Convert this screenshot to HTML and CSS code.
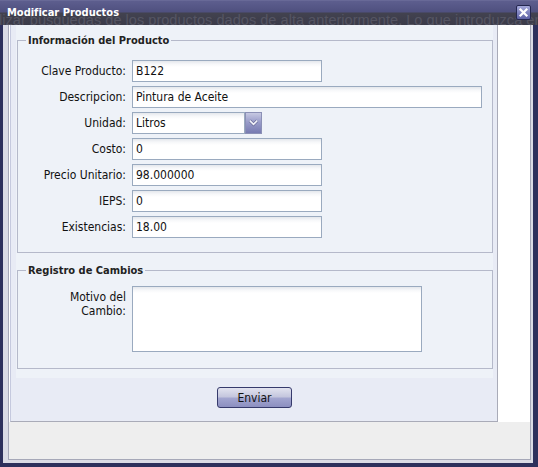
FILE: index.html
```html
<!DOCTYPE html>
<html lang="es">
<head>
<meta charset="utf-8">
<title>Modificar Productos</title>
<link rel="stylesheet" href="styles.css">
</head>
<body>
<div class="win">
  <div class="hdr">
    <span class="ghost">lizar búsquedas de los productos dados de alta anteriormente. Lo que introduzca en el campo de búsqueda</span>
    <span class="title">Modificar Productos</span>
    <span class="close"><svg width="15" height="15" viewBox="0 0 15 15"><defs><linearGradient id="cg" x1="0" y1="0" x2="0" y2="1"><stop offset="0" stop-color="#a6aadb"/><stop offset="1" stop-color="#5b5fa2"/></linearGradient></defs><rect x="0.5" y="0.5" width="14" height="14" rx="1.5" fill="url(#cg)" stroke="#24274f"/><path d="M4.5 4.5 L10.5 10.5 M10.5 4.5 L4.5 10.5" stroke="#ffffff" stroke-width="2.2" stroke-linecap="square"/></svg></span>
  </div>
  <div class="frame">
    <div class="body">
      <div class="scroll">
        <form class="panel">
          <div class="inner">
            <fieldset class="fs fs1">
              <legend>Información del Producto</legend>
              <div class="row"><label>Clave Producto:</label><input class="txt w190" value="B122"></div>
              <div class="row"><label>Descripcion:</label><input class="txt w350" value="Pintura de Aceite"></div>
              <div class="row"><label>Unidad:</label><div class="combo"><input class="txt w113" value="Litros"><span class="trig"><svg width="17" height="22" viewBox="0 0 17 22"><defs><linearGradient id="tg" x1="0" y1="0" x2="0" y2="1"><stop offset="0" stop-color="#c9cbe3"/><stop offset="0.45" stop-color="#9a9dca"/><stop offset="1" stop-color="#7579b0"/></linearGradient></defs><rect x="0.5" y="0.5" width="16" height="21" fill="url(#tg)" stroke="#8b90b6"/><path d="M4.8 8.6 L8.5 12.3 L12.2 8.6" fill="none" stroke="#6a6d99" stroke-width="3"/><path d="M4.8 8.6 L8.5 12.3 L12.2 8.6" fill="none" stroke="#f2f3fa" stroke-width="1.6"/></svg></span></div></div>
              <div class="row"><label>Costo:</label><input class="txt w190" value="0"></div>
              <div class="row"><label>Precio Unitario:</label><input class="txt w190" value="98.000000"></div>
              <div class="row"><label>IEPS:</label><input class="txt w190" value="0"></div>
              <div class="row"><label>Existencias:</label><input class="txt w190" value="18.00"></div>
            </fieldset>
            <fieldset class="fs fs2">
              <legend>Registro de Cambios</legend>
              <div class="row"><label class="multi">Motivo del<br>Cambio:</label><textarea class="area"></textarea></div>
            </fieldset>
          </div>
          <div class="btnbar"><button type="button" class="btn">Enviar</button></div>
        </form>
      </div>
      <div class="foot"></div>
    </div>
  </div>
</div>
</body>
</html>
```

FILE: styles.css
```css
html, body {
  margin: 0;
  padding: 0;
}
body {
  width: 538px;
  height: 467px;
  overflow: hidden;
  background: #3a3a48;
  font-family: "DejaVu Sans Condensed", "Liberation Sans", sans-serif;
  font-size: 12px;
  color: #111;
}
.win {
  width: 538px;
  height: 467px;
}
.hdr {
  position: relative;
  height: 25px;
  box-sizing: border-box;
  padding: 0 7px;
  display: flex;
  justify-content: space-between;
  align-items: flex-start;
  overflow: hidden;
  background: linear-gradient(to bottom, #7374a0 0, #5d5e8e 1px, #4f507f 12px, #42424f 13px, #3b3b49 25px);
}
.ghost {
  position: absolute;
  left: -1px;
  top: 13px;
  height: 12px;
  overflow: hidden;
  white-space: nowrap;
  font-family: "Liberation Sans", sans-serif;
  font-size: 14.6px;
  line-height: 14px;
  color: #555563;
}
.title {
  position: relative;
  color: #ffffff;
  font-weight: bold;
  font-size: 11px;
  line-height: 13px;
  padding-top: 6px;
}
.close {
  position: relative;
  margin-top: 5px;
  width: 15px;
  height: 15px;
}
.close svg, .trig svg {
  display: block;
}
.frame {
  border-style: solid;
  border-color: #2d305c;
  border-width: 0 5px 4px 3px;
  background: #dadbe5;
  padding: 0 2px 3px 5px;
}
.body {
  border: 1px solid #a6a8b8;
  border-top: 0;
  background: #eeeeee;
}
.scroll {
  background: #ffffff;
  padding-left: 1px;
  display: flex;
}
.panel {
  width: 488px;
  height: 397px;
  box-sizing: border-box;
  margin: 0;
  border-left: 1px solid #c5c9de;
  border-right: 1px solid #a9abb8;
  border-bottom: 1px solid #a9abb8;
  background: #e8ebf5;
  padding: 0 4px 0 5px;
}
.inner {
  background: #eef2f8;
  padding: 9px 0 9px 1px;
}
.fs {
  margin: 0;
  border: 1px solid #b5b9ca;
  padding: 13px 0 14px 0;
  min-width: 0;
}
.fs2 {
  margin-top: 11px;
  padding: 9px 0 16px 0;
}
.fs legend {
  margin-left: 8px;
  padding: 0 2px;
  font-weight: bold;
  font-size: 11px;
  line-height: 13px;
  height: 13px;
  color: #222222;
}
.row {
  display: flex;
  align-items: flex-start;
}
.row + .row {
  margin-top: 4px;
}
.row label {
  width: 108px;
  margin-right: 6px;
  text-align: right;
  line-height: 22px;
  color: #111;
}
.row label.multi {
  line-height: 14px;
  padding-top: 4px;
}
.txt {
  height: 22px;
  box-sizing: border-box;
  margin: 0;
  border: 1px solid #9aaabf;
  border-radius: 0;
  padding: 0 3px;
  background: linear-gradient(to bottom, #e4e7ec 0, #f6f7f9 3px, #ffffff 6px);
  font-family: inherit;
  font-size: 12px;
  color: #111;
  outline: none;
}
.w190 { width: 190px; }
.w350 { width: 350px; }
.w113 { width: 113px; }
.combo {
  display: flex;
}
.trig {
  width: 17px;
  height: 22px;
}
.area {
  width: 290px;
  height: 66px;
  box-sizing: border-box;
  margin: 0;
  border: 1px solid #9aaabf;
  padding: 2px 3px;
  resize: none;
  background: linear-gradient(to bottom, #e4e7ec 0, #f6f7f9 3px, #ffffff 6px);
  font-family: inherit;
  font-size: 12px;
  outline: none;
}
.btnbar {
  height: 43px;
  box-sizing: border-box;
  padding-top: 9px;
  display: flex;
  justify-content: center;
  align-items: flex-start;
}
.btn {
  width: 75px;
  height: 21px;
  box-sizing: border-box;
  margin: 0;
  padding: 0;
  border: 1px solid #363a6c;
  border-radius: 3px;
  background: linear-gradient(to bottom, #e2e3ef 0, #c5c7de 45%, #a2a5cf 55%, #8c8fc0 100%);
  font-family: inherit;
  font-size: 12px;
  color: #111;
}
.foot {
  height: 37px;
}
```
